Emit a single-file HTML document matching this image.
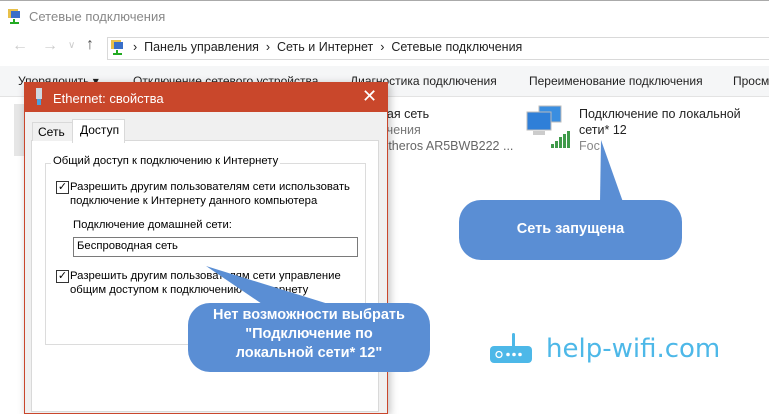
<!DOCTYPE html><html><head><meta charset="utf-8"><style>
body{margin:0;width:769px;height:405px;overflow:hidden;background:#fff;font-family:"Liberation Sans",sans-serif;position:relative;font-size:12px;color:#000}
.a{position:absolute;white-space:nowrap}
.t{position:absolute;top:74px;font-size:12px;color:#222;white-space:nowrap}
</style></head><body>
<div class="a" style="left:0;top:0;width:769px;height:1px;background:#aaa"></div>
<svg class="a" style="left:7px;top:8px" width="14" height="16"><rect x="1" y="1" width="10" height="9" fill="#e8c04a"/><rect x="4" y="3" width="9" height="7" fill="#3a6fc8"/><rect x="6" y="11" width="2" height="3" fill="#2a2"/><rect x="3" y="14" width="9" height="2" fill="#2a2"/></svg>
<div class="a" style="left:29px;top:9px;font-size:13px;color:#888">Сетевые подключения</div>
<div class="a" style="left:12px;top:37px;font-size:16px;color:#ccc">←</div>
<div class="a" style="left:42px;top:37px;font-size:16px;color:#ccc">→</div>
<div class="a" style="left:68px;top:40px;font-size:10px;color:#ccc">∨</div>
<div class="a" style="left:86px;top:36px;font-size:16px;color:#555">↑</div>
<div class="a" style="left:107px;top:37px;width:662px;height:21px;border:1px solid #d9d9d9;border-right:none"></div>
<svg class="a" style="left:110px;top:39px" width="14" height="16"><rect x="1" y="1" width="10" height="9" fill="#e8c04a"/><rect x="4" y="3" width="9" height="7" fill="#3a6fc8"/><rect x="6" y="11" width="2" height="3" fill="#2a2"/><rect x="3" y="14" width="9" height="2" fill="#2a2"/></svg>
<div class="a" style="left:133px;top:40px;font-size:12.5px;color:#222">›&nbsp; Панель управления &nbsp;›&nbsp; Сеть и Интернет &nbsp;›&nbsp; Сетевые подключения</div>
<div class="a" style="left:0;top:66px;width:769px;height:30px;background:#f5f6f7;border-bottom:1px solid #e3e3e3"></div>
<div class="t" style="left:18px">Упорядочить ▾</div>
<div class="t" style="left:133px">Отключение сетевого устройства</div>
<div class="t" style="left:350px">Диагностика подключения</div>
<div class="t" style="left:529px">Переименование подключения</div>
<div class="t" style="left:733px">Просмотр</div>
<div class="a" style="left:14px;top:104px;width:12px;height:52px;background:#e6e6e6"></div>
<div class="a" style="left:380px;top:106px;font-size:12.5px;line-height:16px;color:#222">ная сеть<br><span style="color:#777">очения</span><br><span style="color:#666">Atheros AR5BWB222 ...</span></div>
<svg class="a" style="left:525px;top:104px" width="50" height="46"><rect x="14" y="2" width="22" height="16" fill="#3a8ee0" stroke="#bbb"/><rect x="2" y="8" width="24" height="18" fill="#2f7fd8" stroke="#bbb"/><rect x="8" y="27" width="12" height="4" fill="#ccc"/><g fill="#3f9a4a"><rect x="26" y="40" width="3" height="4"/><rect x="30" y="37" width="3" height="7"/><rect x="34" y="33" width="3" height="11"/><rect x="38" y="30" width="3" height="14"/><rect x="42" y="27" width="3" height="17"/></g></svg>
<div class="a" style="left:579px;top:106px;font-size:12.5px;line-height:16px;color:#222">Подключение по локальной<br>сети* 12<br><span style="color:#888">Foc</span></div>
<!-- dialog -->
<div class="a" style="left:24px;top:82px;width:362px;height:330px;background:#f0f0f0;border:1px solid #c9462c;box-shadow:2px 2px 8px rgba(0,0,0,.25)"></div>
<div class="a" style="left:24px;top:82px;width:363px;height:30px;background:#c9472b"></div>
<svg class="a" style="left:34px;top:88px" width="10" height="18"><rect x="2" y="0" width="6" height="11" fill="#cfd8e0"/><rect x="3" y="11" width="4" height="6" fill="#4aa0e0"/></svg>
<div class="a" style="left:53px;top:91px;font-size:13px;color:#fff">Ethernet: свойства</div>
<div class="a" style="left:362px;top:86px;font-size:18px;color:#fff">✕</div>
<div class="a" style="left:31px;top:140px;width:346px;height:270px;background:#fff;border:1px solid #d9d9d9"></div>
<div class="a" style="left:32px;top:122px;width:39px;height:18px;border:1px solid #d9d9d9;border-bottom:none;background:#f0f0f0"></div>
<div class="a" style="left:38px;top:125px;font-size:12px">Сеть</div>
<div class="a" style="left:72px;top:119px;width:51px;height:23px;border:1px solid #d9d9d9;border-bottom:none;background:#fff"></div>
<div class="a" style="left:80px;top:123px;font-size:12px">Доступ</div>
<div class="a" style="left:45px;top:163px;width:319px;height:180px;border:1px solid #dcdcdc"></div>
<div class="a" style="left:51px;top:155px;background:#fff;padding:0 2px;font-size:11.3px">Общий доступ к подключению к Интернету</div>
<div class="a" style="left:56px;top:181px;width:11px;height:11px;border:1px solid #333;font-size:11px;line-height:11px;text-align:center">✓</div>
<div class="a" style="left:70px;top:180px;font-size:11.3px;line-height:14px">Разрешить другим пользователям сети использовать<br>подключение к Интернету данного компьютера</div>
<div class="a" style="left:73px;top:219px;font-size:11.3px">Подключение домашней сети:</div>
<div class="a" style="left:73px;top:237px;width:283px;height:18px;border:1px solid #7a7a7a"></div>
<div class="a" style="left:77px;top:240px;font-size:11.3px">Беспроводная сеть</div>
<div class="a" style="left:56px;top:270px;width:11px;height:11px;border:1px solid #333;font-size:11px;line-height:11px;text-align:center">✓</div>
<div class="a" style="left:70px;top:269px;font-size:11.3px;line-height:14px">Разрешить другим пользователям сети управление<br>общим доступом к подключению к Интернету</div>
<!-- callouts -->
<svg class="a" style="left:0;top:0" width="769" height="405">
<path d="M601 140 L600 202 L623 202 Z" fill="#5a8ed4"/>
<rect x="459" y="200" width="223" height="60" rx="22" fill="#5a8ed4"/>
<path d="M206 266 L265 306 L335 306 Z" fill="#5a8ed4"/>
<rect x="188" y="303" width="242" height="69" rx="22" fill="#5a8ed4"/>
</svg>
<div class="a" style="left:459px;top:221px;width:223px;text-align:center;font-size:14.5px;font-weight:bold;color:#fff">Сеть запущена</div>
<div class="a" style="left:188px;top:306px;width:242px;text-align:center;font-size:14.5px;font-weight:bold;color:#fff;line-height:19px">Нет возможности выбрать<br>"Подключение по<br>локальной сети* 12"</div>
<svg class="a" style="left:490px;top:333px" width="42" height="31"><rect x="22" y="0" width="3" height="14" rx="1.5" fill="#4db8e8"/><rect x="0" y="13" width="42" height="17" rx="4" fill="#4db8e8"/><circle cx="9" cy="21.5" r="3" fill="none" stroke="#fff" stroke-width="1.3"/><circle cx="18" cy="21.5" r="1.8" fill="#fff"/><circle cx="24" cy="21.5" r="1.8" fill="#fff"/><circle cx="30" cy="21.5" r="1.8" fill="#fff"/></svg>
<div class="a" style="left:546px;top:334px;font-size:26px;color:#4db8e8;font-family:'DejaVu Sans',sans-serif">help-wifi.com</div>
</body></html>
